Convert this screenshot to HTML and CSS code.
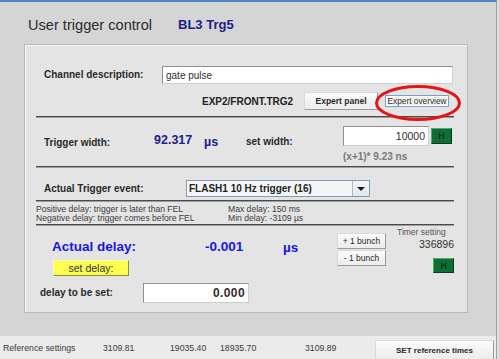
FILE: index.html
```html
<!DOCTYPE html>
<html lang="en">
<head>
    <meta charset="UTF-8">
    <title>User trigger control</title>
    <link rel="stylesheet" href="styles.css">
</head>
<body>
    <div class="window">
        <div class="header">
            <span class="title">User trigger control</span>
            <span class="channel-name">BL3 Trg5</span>
        </div>

        <div class="panel">
            <div class="section channel">
                <div class="row">
                    <label class="label" for="desc">Channel description:</label>
                    <input class="text-input desc-input" id="desc" type="text" value="gate pulse">
                </div>
                <div class="row device-row">
                    <span class="device">EXP2/FRONT.TRG2</span>
                    <button class="btn btn-expert">Expert panel</button>
                    <button class="btn btn-overview">Expert overview</button>
                </div>
            </div>

            <div class="sep"></div>

            <div class="section width">
                <span class="label w-label">Trigger width:</span>
                <span class="value w-value">92.317</span>
                <span class="value w-unit">µs</span>
                <span class="label w-set">set width:</span>
                <div class="w-col">
                    <div class="w-inputs">
                        <input class="text-input num-input width-input" type="text" value="10000">
                        <button class="btn-h">H</button>
                    </div>
                    <div class="formula">(x+1)* 9.23 ns</div>
                </div>
            </div>

            <div class="sep"></div>

            <div class="section event">
                <span class="label ev-label">Actual Trigger event:</span>
                <div class="combo">
                    <span class="combo-text">FLASH1 10 Hz trigger (16)</span>
                    <span class="combo-arrow"></span>
                </div>
            </div>

            <div class="sep"></div>

            <div class="section info">
                <div class="info-col">
                    <div>Positive delay: trigger is later than FEL</div>
                    <div>Negative delay: trigger comes before FEL</div>
                </div>
                <div class="info-col info-limits">
                    <div>Max delay: 150 ms</div>
                    <div>Min delay: -3109 µs</div>
                </div>
            </div>

            <div class="sep"></div>

            <div class="section delay">
                <div class="delay-top">
                    <div class="d-left">
                        <div class="d-big">Actual delay:</div>
                        <button class="btn-yellow">set delay:</button>
                    </div>
                    <span class="d-big d-value">-0.001</span>
                    <span class="d-big d-unit">µs</span>
                    <div class="bunch">
                        <button class="btn btn-bunch">+ 1 bunch</button>
                        <button class="btn btn-bunch">- 1 bunch</button>
                    </div>
                    <div class="timer">
                        <div class="timer-label">Timer setting</div>
                        <div class="timer-value">336896</div>
                        <button class="btn-h btn-h-small">H</button>
                    </div>
                </div>
                <div class="delay-set">
                    <span class="label ds-label">delay to be set:</span>
                    <input class="text-input num-input ds-input" type="text" value="0.000">
                </div>
            </div>

            <svg class="marker" width="88" height="38" viewBox="0 0 88 38">
                <ellipse cx="44" cy="19" rx="41.5" ry="16.5" fill="none" stroke="#e5141b" stroke-width="3"/>
            </svg>
        </div>

        <div class="footer">
            <span class="f-cell f-name">Reference settings</span>
            <span class="f-cell f-a">3109.81</span>
            <span class="f-cell f-b">19035.40</span>
            <span class="f-cell f-c">18935.70</span>
            <span class="f-cell f-d">3109.89</span>
            <button class="btn btn-ref">SET reference times</button>
        </div>
    </div>
</body>
</html>
```

FILE: styles.css
```css
body {
    margin: 0;
    padding: 0;
    background-color: #dedede;
    font-family: "Liberation Sans", Arial, sans-serif;
    color: #2e2e2e;
    overflow: hidden;
}

.window {
    width: 496px;
    height: 357px;
    background-color: #d5d5d5;
    border-top: 2px solid #4a86c4;
    border-right: 1px solid #a2a2a2;
}

.header {
    box-sizing: border-box;
    height: 42px;
    padding: 3px 0 0 28px;
    display: flex;
    align-items: center;
}

.title {
    font-size: 14.6px;
    color: #2b2b2b;
    width: 150px;
}

.channel-name {
    font-size: 13px;
    font-weight: bold;
    color: #1d1d8c;
}

.panel {
    position: relative;
    margin-left: 24px;
    width: 442px;
    height: 267px;
    background-color: #e4e4e4;
    border: 1px solid #b9b9b9;
    box-shadow: inset 1px 1px 0 #f7f7f7;
}

.sep {
    height: 0;
    margin: 0 13px 0 11px;
    border-top: 1px solid #4b4b4b;
    border-bottom: 1px solid #9d9d9d;
}

.label {
    font-size: 10px;
    font-weight: bold;
    line-height: 14px;
    color: #2a2a2a;
}

.btn {
    box-sizing: border-box;
    padding: 0;
    font-family: "Liberation Sans", Arial, sans-serif;
    color: #2a2a2a;
    background: linear-gradient(#fbfbfb, #ececec);
    border: 1px solid;
    border-color: #dadada #9a9a9a #9a9a9a #dadada;
}

.text-input {
    box-sizing: border-box;
    margin: 0;
    padding: 0 3px;
    background: #ffffff;
    border: 1px solid;
    border-color: #8f8f8f #cfcfcf #cfcfcf #8f8f8f;
    font-family: "Liberation Sans", Arial, sans-serif;
    color: #2e2e2e;
    outline: none;
}

.num-input {
    text-align: right;
    font-weight: bold;
    font-size: 12px;
    letter-spacing: 0.4px;
}

.btn-h {
    box-sizing: border-box;
    padding: 0;
    width: 21px;
    height: 16px;
    background-color: #0c7034;
    border: 1px solid;
    border-color: #5aa474 #12351e #12351e #5aa474;
    font-family: "Liberation Sans", Arial, sans-serif;
    font-size: 8.5px;
    color: #0a0a0a;
}

/* channel description */
.channel {
    height: 71px;
    padding-top: 21px;
    box-sizing: border-box;
}

.row {
    display: flex;
    align-items: center;
    padding-left: 19px;
}

.row .label {
    width: 118px;
}

.desc-input {
    width: 291px;
    height: 18px;
    font-size: 10px;
}

.device-row {
    margin-top: 8px;
    height: 18px;
    padding-left: 177px;
}

.device {
    width: 102px;
    font-size: 10px;
    font-weight: bold;
    color: #222;
}

.btn-expert {
    width: 74px;
    height: 18px;
    font-size: 8.5px;
    font-weight: bold;
}

.btn-overview {
    margin-left: 7px;
    width: 64px;
    height: 12px;
    font-size: 8.3px;
    line-height: 10px;
    background: #f0f0f0;
    border: 1px solid #7d9ecb;
    box-shadow: inset 0 0 0 1px #ffffff;
    color: #333;
}

.marker {
    position: absolute;
    left: 349px;
    top: 39px;
}

/* trigger width */
.width {
    height: 48px;
    display: flex;
    align-items: flex-start;
    padding-left: 19px;
}

.value {
    font-size: 12.5px;
    font-weight: bold;
    line-height: 16px;
    color: #1e1e8e;
}

.w-label {
    width: 110px;
    margin-top: 18px;
}

.w-value {
    width: 50px;
    margin-top: 14px;
}

.w-unit {
    width: 42px;
    margin-top: 16px;
}

.w-set {
    width: 97px;
    margin-top: 17px;
}

.w-col {
    margin-top: 8px;
}

.w-inputs {
    display: flex;
    align-items: center;
}

.width-input {
    width: 86px;
    height: 20px;
    font-weight: normal;
    font-size: 10.5px;
    letter-spacing: 0;
    margin-right: 2px;
}

.formula {
    margin-top: 5px;
    font-size: 10px;
    font-weight: bold;
    line-height: 12px;
    color: #7a7a7a;
}

/* trigger event */
.event {
    height: 32px;
    box-sizing: border-box;
    padding: 9px 0 0 19px;
    display: flex;
    align-items: center;
}

.ev-label {
    width: 142px;
}

.combo {
    box-sizing: border-box;
    width: 184px;
    height: 17px;
    display: flex;
    align-items: center;
    background: #f5f5f5;
    border: 1px solid #7f9cba;
}

.combo-text {
    flex: 1;
    padding-left: 2px;
    font-size: 10px;
    font-weight: bold;
    color: #1e1e1e;
}

.combo-arrow {
    position: relative;
    width: 16px;
    height: 15px;
    background: linear-gradient(#f6f6f6, #e4e6e8);
    border-left: 1px solid #a7b6c8;
}

.combo-arrow::after {
    content: "";
    position: absolute;
    left: 4px;
    top: 6px;
    border-left: 4px solid transparent;
    border-right: 4px solid transparent;
    border-top: 4px solid #1a1a1a;
}

/* info lines */
.info {
    height: 22px;
    box-sizing: border-box;
    padding: 3px 0 0 11px;
    display: flex;
    font-size: 8.6px;
    line-height: 9px;
    color: #3c3c3c;
}

.info-col {
    width: 192px;
}

/* actual delay */
.delay-top {
    display: flex;
    align-items: flex-start;
}

.d-big {
    font-size: 13.5px;
    font-weight: bold;
    line-height: 19px;
    color: #1717e2;
}

.d-left {
    margin-left: 27px;
    width: 153px;
    margin-top: 11px;
}

.btn-yellow {
    display: block;
    box-sizing: border-box;
    margin: 4px 0 0 1px;
    padding: 0;
    width: 76px;
    height: 16px;
    background-color: #fdfd52;
    border: 1px solid;
    border-color: #fbfbb0 #8e8e32 #8e8e32 #fbfbb0;
    font-family: "Liberation Sans", Arial, sans-serif;
    font-size: 10.5px;
    color: #333;
}

.d-value {
    width: 78px;
    margin-top: 11px;
}

.d-unit {
    width: 54px;
    margin-top: 12px;
}

.bunch {
    width: 60px;
    margin-top: 7px;
    display: flex;
    flex-direction: column;
    gap: 1px;
}

.btn-bunch {
    width: 49px;
    height: 16px;
    font-size: 8.5px;
}

.timer {
    width: 57px;
    display: flex;
    flex-direction: column;
    align-items: flex-end;
}

.timer-label {
    align-self: flex-start;
    font-size: 8.5px;
    line-height: 12px;
    color: #555;
}

.timer-value {
    font-size: 10.5px;
    line-height: 13px;
    color: #333;
}

.btn-h-small {
    margin-top: 7px;
    height: 15px;
}

.delay-set {
    margin-top: 7px;
    display: flex;
    align-items: center;
}

.ds-label {
    margin-left: 15px;
    width: 103px;
}

.ds-input {
    width: 106px;
    height: 20px;
}

/* reference bar */
.footer {
    margin-top: 23px;
    height: 23px;
    background-color: #ebebeb;
    display: flex;
    align-items: center;
    font-size: 8.7px;
    color: #3a3a3a;
}

.f-name { width: 100px; padding-left: 3px; }
.f-a { width: 67px; }
.f-b { width: 50px; }
.f-c { width: 85px; }
.f-d { width: 70px; }

.btn-ref {
    align-self: flex-start;
    margin-top: 4px;
    width: 119px;
    height: 20px;
    font-size: 8px;
    font-weight: bold;
}
```
